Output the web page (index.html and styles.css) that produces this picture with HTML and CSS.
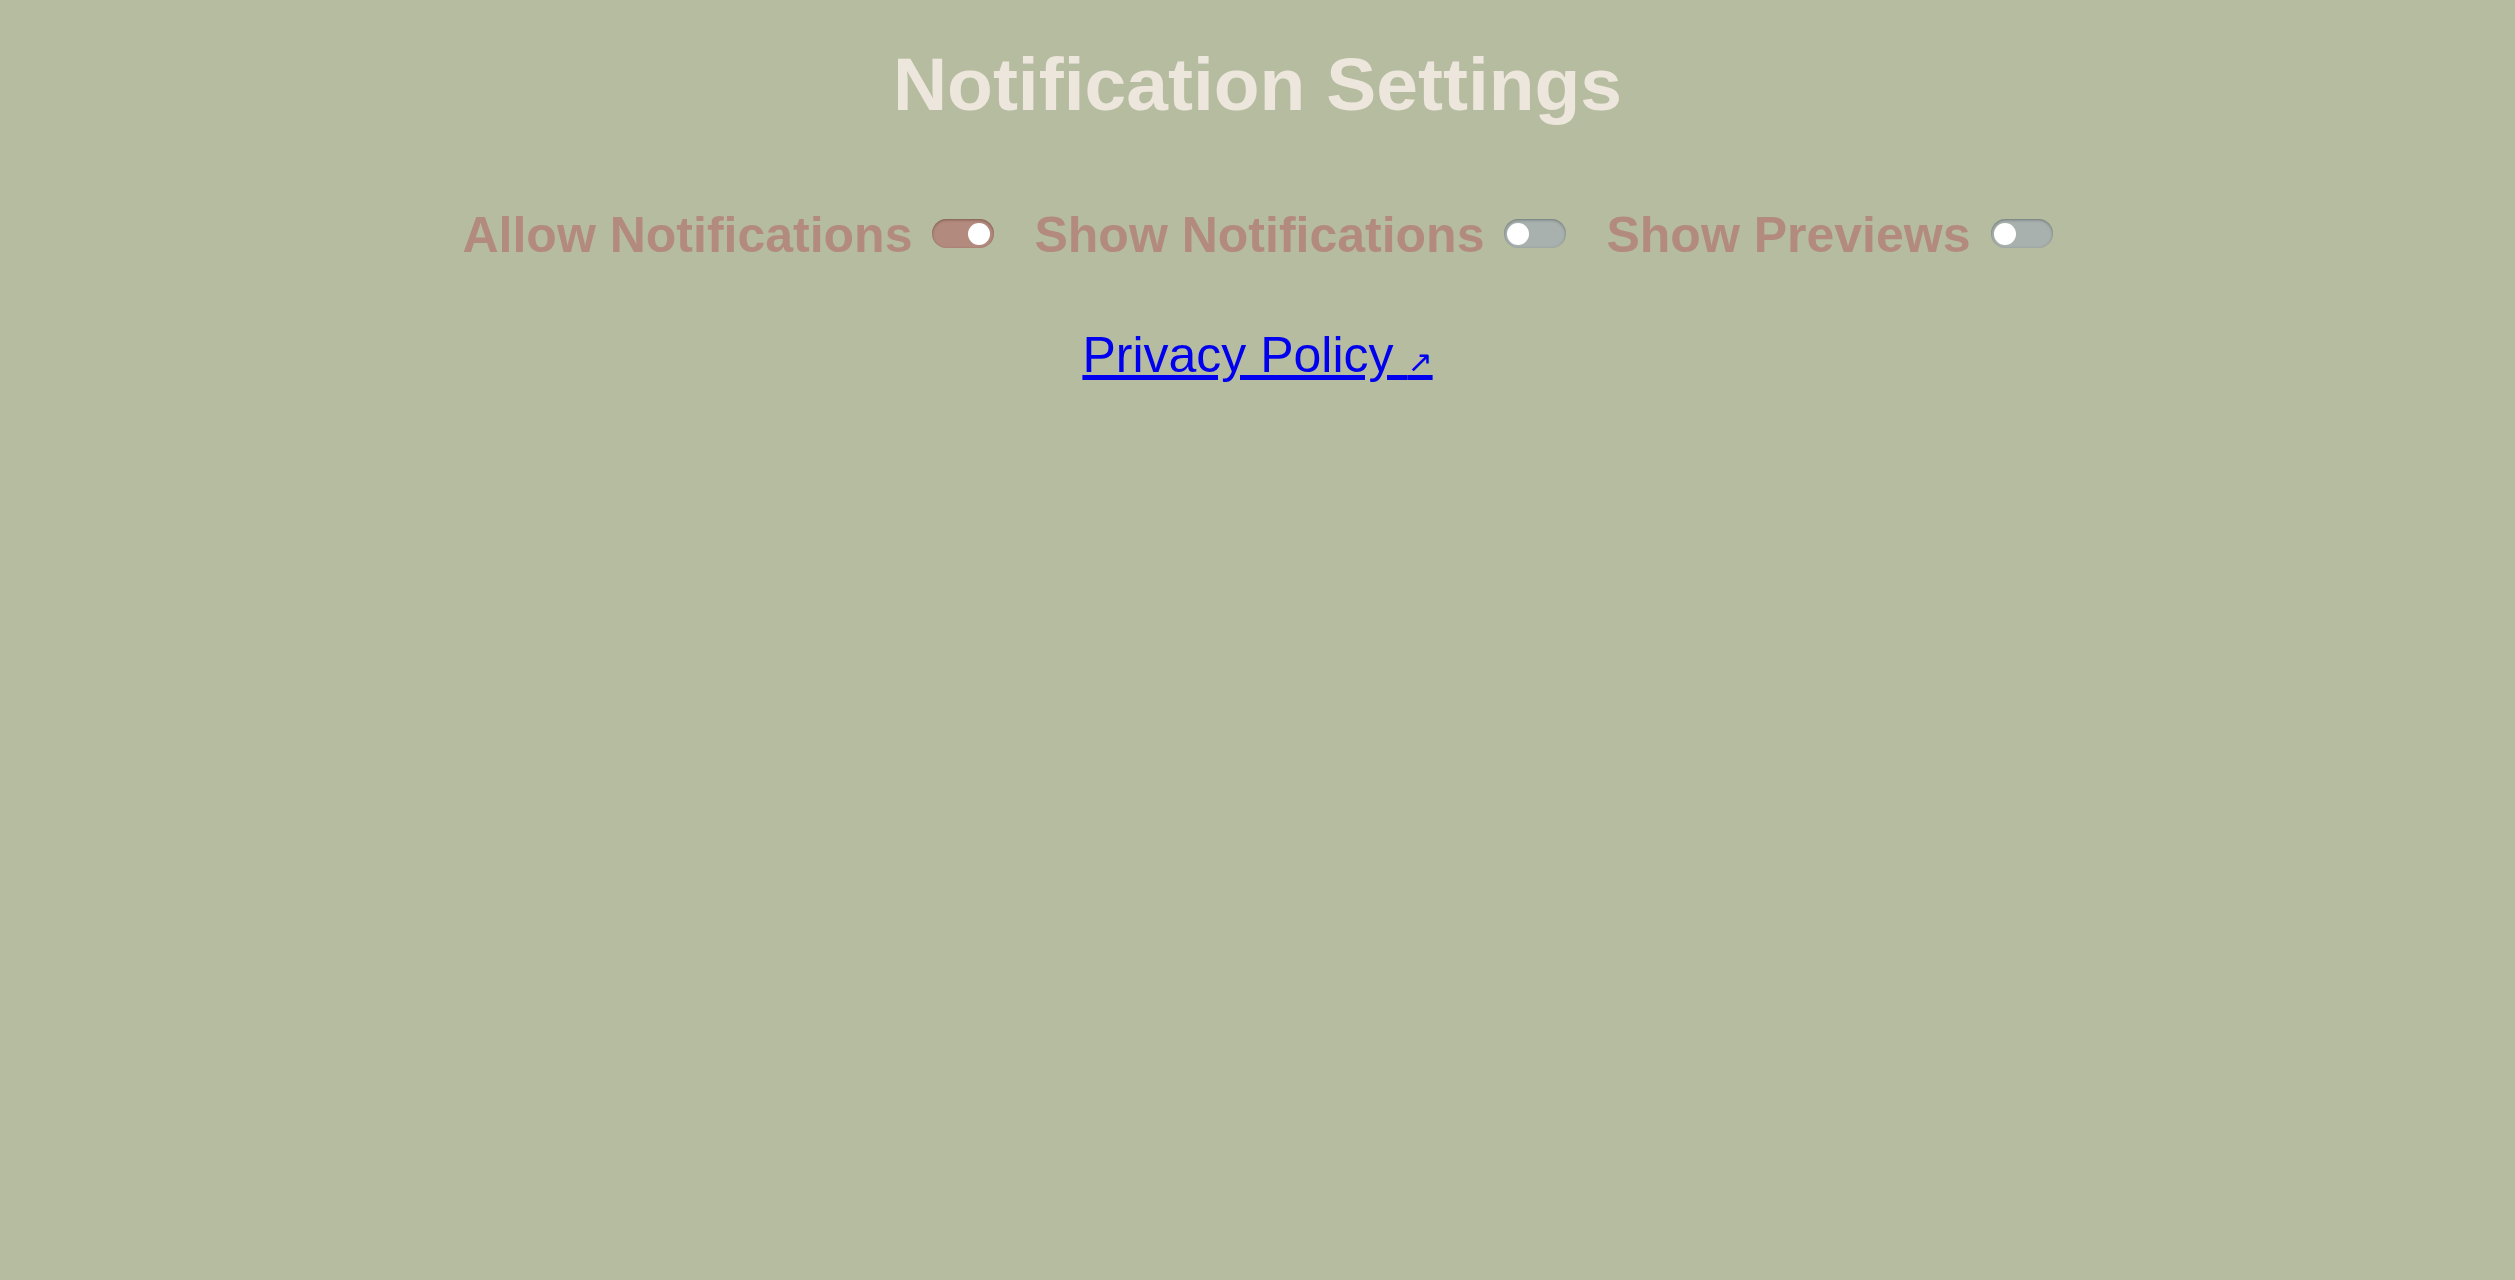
FILE: index.html
```
<!DOCTYPE html>
<html lang="en">
<head>
<meta charset="utf-8">
<title>Notification Settings</title>
<link rel="stylesheet" href="styles.css">
</head>
<body>
<main class="page">
  <h1 class="title">Notification Settings</h1>
  <div class="settings">
    <label class="setting">
      <span class="setting-label">Allow Notifications</span>
      <span class="switch is-on" role="switch" aria-checked="true"><span class="knob"></span></span>
    </label>
    <label class="setting">
      <span class="setting-label">Show Notifications</span>
      <span class="switch" role="switch" aria-checked="false"><span class="knob"></span></span>
    </label>
    <label class="setting">
      <span class="setting-label">Show Previews</span>
      <span class="switch" role="switch" aria-checked="false"><span class="knob"></span></span>
    </label>
  </div>
  <a class="policy" href="#">Privacy Policy <span class="ext">↗</span></a>
</main>
</body>
</html>
```
FILE: styles.css
```
html, body {
  margin: 0;
  padding: 0;
  background: #b6bc9f;
}
body {
  font-family: "Liberation Sans", Arial, sans-serif;
}
.page {
  display: flex;
  flex-direction: column;
  align-items: center;
  padding-top: 41px;
}
.title {
  margin: 0;
  font-size: 75px;
  font-weight: bold;
  color: #ede6dc;
  line-height: normal;
}
.settings {
  display: flex;
  align-items: center;
  gap: 40px;
  margin-top: 79px;
}
.setting {
  display: flex;
  align-items: center;
  gap: 20px;
}
.setting-label {
  font-size: 50px;
  font-weight: bold;
  color: #b38b7e;
  line-height: normal;
}
.switch {
  position: relative;
  display: block;
  width: 62px;
  height: 29px;
  border-radius: 15px;
  background: #a9b1af;
  box-shadow: inset 0 1px 3px rgba(60, 70, 70, 0.55);
  margin-top: -3px;
}
.switch.is-on {
  background: #b38b7e;
  box-shadow: inset 0 1px 3px rgba(80, 50, 40, 0.55);
}
.knob {
  position: absolute;
  top: 3.5px;
  left: 3px;
  width: 22px;
  height: 22px;
  border-radius: 50%;
  background: #ffffff;
}
.switch.is-on .knob {
  left: auto;
  right: 4px;
}
.policy {
  margin-top: 62px;
  font-size: 50px;
  color: #0000ee;
  line-height: normal;
}
.ext {
  font-family: "DejaVu Sans", sans-serif;
  font-size: 30px;
}
```
